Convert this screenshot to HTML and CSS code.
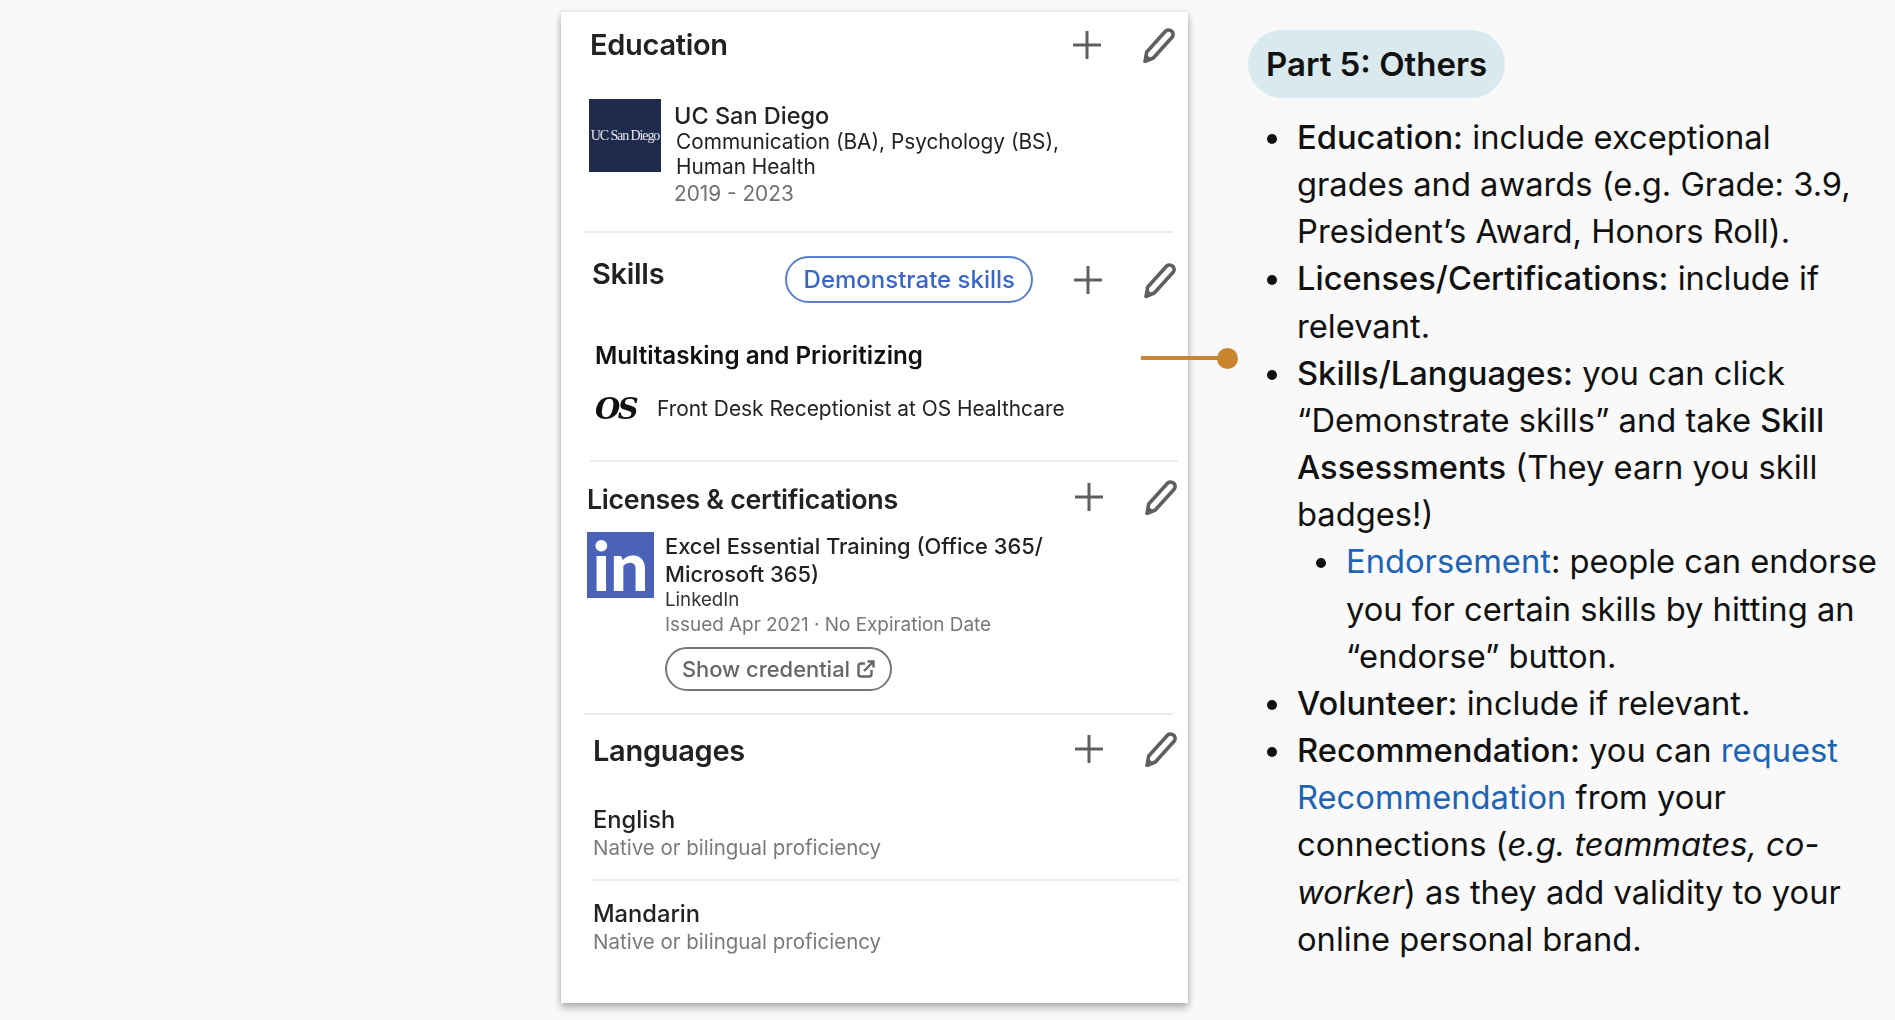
FILE: index.html
```html
<!DOCTYPE html>
<html lang="en">
  <head>
    <meta charset="UTF-8" />
    <title>Part 5: Others</title>
    <link rel="stylesheet" href="styles.css">
  </head>
  <body>
    <svg width="0" height="0" class="defs">
      <symbol id="plus" viewBox="0 0 30 30">
        <path d="M15 1V29M1 15H29" fill="none" stroke="#5f5f5f" stroke-width="3"/>
      </symbol>
      <symbol id="pencil" viewBox="0 0 32 36">
        <path d="M3.700 25L22.700 4A4.500 4.500 0 0 1 29.300 10L10.300 31L2 34.500Z" fill="none" stroke="#5f5f5f" stroke-width="3.600" stroke-linejoin="round"/>
        <path d="M2 34.500l1.500-7 5 4.500z" fill="#5f5f5f"/>
      </symbol>
    </svg>

    <div class="card">
      <div class="sec edu">
        <div class="head">
          <h2>Education</h2>
          <div class="tools">
            <svg class="plus"><use href="#plus"/></svg>
            <svg class="pencil"><use href="#pencil"/></svg>
          </div>
        </div>
        <div class="item">
          <div class="ucsd">UC San Diego</div>
          <div class="edu-text">
            <div class="school">UC San Diego</div>
            <div class="degree">Communication (BA), Psychology (BS),<br>Human Health</div>
            <div class="years">2019 - 2023</div>
          </div>
        </div>
      </div>

      <div class="sec skills">
        <div class="head">
          <h2>Skills</h2>
          <a class="demo">Demonstrate skills</a>
          <div class="tools">
            <svg class="plus"><use href="#plus"/></svg>
            <svg class="pencil"><use href="#pencil"/></svg>
          </div>
        </div>
        <div class="skill">Multitasking and Prioritizing</div>
        <div class="job">
          <span class="os">OS</span>
          <span>Front Desk Receptionist at OS Healthcare</span>
        </div>
      </div>

      <div class="sec lic">
        <div class="head">
          <h2>Licenses &amp; certifications</h2>
          <div class="tools">
            <svg class="plus"><use href="#plus"/></svg>
            <svg class="pencil"><use href="#pencil"/></svg>
          </div>
        </div>
        <div class="item">
          <div class="in-logo">in</div>
          <div class="lic-text">
            <div class="course">Excel Essential Training (Office 365/<br>Microsoft 365)</div>
            <div class="issuer">LinkedIn</div>
            <div class="issued">Issued Apr 2021 · No Expiration Date</div>
            <a class="cred">Show credential
              <svg width="18" height="18" viewBox="0 0 18 18">
                <path d="M8 3.500H4a2.500 2.500 0 0 0-2.500 2.500v8A2.500 2.500 0 0 0 4 16.500h8a2.500 2.500 0 0 0 2.500-2.500v-4M7 11L16 2M10.500 1.500h6v6" fill="none" stroke="#666" stroke-width="2.400"/>
              </svg>
            </a>
          </div>
        </div>
      </div>

      <div class="sec lang">
        <div class="head">
          <h2>Languages</h2>
          <div class="tools">
            <svg class="plus"><use href="#plus"/></svg>
            <svg class="pencil"><use href="#pencil"/></svg>
          </div>
        </div>
        <div class="lang-name first">English</div>
        <div class="level">Native or bilingual proficiency</div>
        <div class="lang-line"></div>
        <div class="lang-name">Mandarin</div>
        <div class="level">Native or bilingual proficiency</div>
      </div>
    </div>

    <div class="notes">
      <div class="badge">Part 5: Others</div>
      <ul>
        <li><b>Education:</b> include exceptional grades and awards (e.g. Grade: 3.9, President’s Award, Honors Roll).</li>
        <li><b>Licenses/Certifications:</b> include if relevant.</li>
        <li><b>Skills/Languages:</b> you can click “Demonstrate skills” and take <b>Skill Assessments</b> (They earn you skill badges!)
          <ul>
            <li><a>Endorsement</a>: people can endorse you for certain skills by hitting an “endorse” button.</li>
          </ul>
        </li>
        <li><b>Volunteer:</b> include if relevant.</li>
        <li><b>Recommendation:</b> you can <a>request Recommendation</a> from your connections (<i>e.g. teammates, co-worker</i>) as they add validity to your online personal brand.</li>
      </ul>
    </div>

    <div class="pointer"></div>
  </body>
</html>
```

FILE: styles.css
```css
* {
  box-sizing: border-box;
}
html, body {
  height: 100%;
  overflow: hidden;
}
body {
  margin: 0;
  background: #f9f9f9;
  font-family: Inter, "Liberation Sans", sans-serif;
  color: #111;
  display: flex;
  align-items: flex-start;
  padding-left: 561px;
}
.defs {
  position: absolute;
}

/* profile card */
.card {
  width: 627px;
  height: 991px;
  margin-top: 12px;
  background: #fff;
  box-shadow: 0 5px 8px rgba(0, 0, 0, 0.28), 0 0 5px rgba(0, 0, 0, 0.12);
  flex-shrink: 0;
}
.sec {
  position: relative;
  padding-right: 12px;
  filter: blur(0.4px);
}
.sec::before {
  content: "";
  display: block;
  height: 2px;
  background: #ececec;
}
.edu::before {
  display: none;
}
.head {
  display: flex;
  align-items: center;
  height: 34px;
}
h2 {
  margin: 0;
  font-size: 29px;
  line-height: 34px;
  font-weight: 600;
  color: #222;
  letter-spacing: -0.3px;
}
.tools {
  margin-left: auto;
  display: flex;
  align-items: center;
  gap: 41px;
}
.plus {
  width: 30px;
  height: 30px;
}
.pencil {
  width: 32px;
  height: 36px;
}
.item {
  display: flex;
}

.edu {
  height: 219px;
  padding-top: 16px;
  padding-left: 29px;
  padding-right: 13px;
}
.edu .item {
  margin-top: 37px;
  margin-left: -1px;
}
.ucsd {
  width: 72px;
  height: 73px;
  background: #1f2a4d;
  color: #e8e8ee;
  font-family: "Liberation Serif", serif;
  font-size: 14px;
  letter-spacing: -1.1px;
  white-space: nowrap;
  display: flex;
  align-items: center;
  justify-content: center;
}
.edu-text {
  margin-left: 13px;
  padding-top: 3px;
}
.school {
  font-size: 23.500px;
  line-height: 27px;
  font-weight: 500;
  color: #222;
}
.degree {
  font-size: 20.800px;
  line-height: 25px;
  margin-left: 2px;
  color: #222;
}
.years {
  margin-top: 2px;
  font-size: 20.800px;
  line-height: 26px;
  color: #707070;
}

.skills {
  height: 229px;
  padding-top: 25px;
  padding-left: 31px;
  margin-left: 23px;
  margin-right: 12px;
  padding-right: 0;
}
.skills::before {
  position: absolute;
  top: 0;
  left: 0;
  right: 3px;
}
.skills .head {
  height: 47px;
}
.skills h2 {
  margin-top: -12px;
  margin-left: -23px;
}
.demo {
  margin-left: 121px;
  width: 248px;
  height: 47px;
  border: 2px solid #5a80cd;
  border-radius: 24px;
  color: #3b66c4;
  font-size: 24px;
  font-weight: 500;
  display: flex;
  align-items: center;
  justify-content: center;
}
.skill {
  margin-top: 38px;
  margin-left: -20px;
  font-size: 24.200px;
  line-height: 30px;
  font-weight: 600;
}
.job {
  margin-top: 23px;
  margin-left: -20px;
  display: flex;
  align-items: center;
  font-size: 20.900px;
  line-height: 30px;
  color: #222;
}
.os {
  width: 62px;
  font-family: "DejaVu Serif", serif;
  font-weight: 700;
  font-style: italic;
  font-size: 29px;
  letter-spacing: -2.5px;
  color: #111;
}

.lic {
  height: 253px;
  padding-left: 26px;
  padding-right: 11px;
}
.lic::before {
  margin-left: 3px;
  margin-right: -1px;
  margin-bottom: 18px;
}
.lic h2 {
  margin-top: 3px;
  font-size: 26.800px;
}
.lic .item {
  margin-top: 18px;
}
.in-logo {
  width: 67px;
  height: 66px;
  background: #4a63b8;
  color: #fff;
  font-family: Lato, "Liberation Sans", sans-serif;
  font-weight: 900;
  font-size: 68px;
  line-height: 66px;
  text-align: center;
}
.lic-text {
  margin-left: 11px;
}
.course {
  font-size: 21.850px;
  line-height: 28px;
  font-weight: 500;
  color: #222;
}
.issuer {
  margin-top: 1px;
  font-size: 18.700px;
  line-height: 22px;
  color: #333;
}
.issued {
  margin-top: 2px;
  font-size: 18.900px;
  line-height: 24px;
  color: #777;
}
.cred {
  margin-top: 10px;
  width: 227px;
  height: 44px;
  border: 2px solid #777;
  border-radius: 22px;
  color: #666;
  font-size: 21.900px;
  font-weight: 500;
  display: flex;
  align-items: center;
  justify-content: center;
  gap: 7px;
}

.lang {
  padding-left: 32px;
  padding-right: 11px;
}
.lang::before {
  margin-left: -9px;
  margin-right: 4px;
  margin-bottom: 17px;
}
.lang h2 {
  margin-top: 3px;
}
.lang-name {
  margin-top: 18px;
  font-size: 23.700px;
  line-height: 30px;
  font-weight: 500;
  color: #222;
}
.lang-name.first {
  margin-top: 39px;
}
.level {
  font-size: 20.500px;
  line-height: 26px;
  color: #7a7a7a;
}
.lang-line {
  margin-top: 18px;
  margin-right: -2px;
  height: 2px;
  background: #ececec;
}

/* notes on the right */
.notes {
  margin-left: 60px;
  margin-top: 30px;
  width: 635px;
  flex-shrink: 0;
}
.badge {
  display: inline-flex;
  align-items: center;
  height: 68px;
  padding: 0 18px;
  border-radius: 34px;
  background: #d9e9ee;
  font-size: 33px;
  font-weight: 600;
}
ul {
  margin: 0;
  padding-left: 49px;
  font-size: 32.700px;
  line-height: 47.150px;
  list-style: none;
}
li {
  position: relative;
}
li::before {
  content: "";
  position: absolute;
  left: -30px;
  top: 20px;
  width: 10px;
  height: 10px;
  border-radius: 50%;
  background: #111;
}
.notes > ul {
  margin-top: 16px;
}
b {
  font-weight: 550;
}
a {
  color: #1f63b5;
}
.cred, .demo {
  text-decoration: none;
}
.cred {
  color: #666;
}
.demo {
  color: #3b66c4;
}

/* line from the card to the notes */
.pointer {
  position: absolute;
  left: 1141px;
  top: 356px;
  width: 87px;
  height: 4px;
  background: #c9852f;
}
.pointer::after {
  content: "";
  position: absolute;
  right: -10px;
  top: -8px;
  width: 21px;
  height: 21px;
  border-radius: 50%;
  background: #c9852f;
}
```
